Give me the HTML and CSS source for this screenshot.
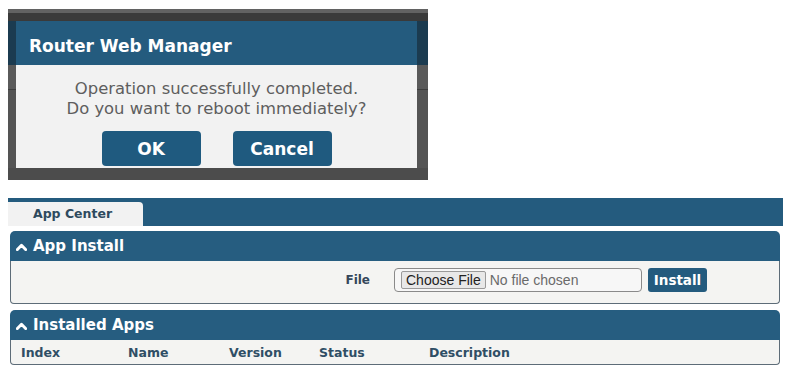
FILE: index.html
```html
<!DOCTYPE html>
<html>
<head>
<meta charset="utf-8">
<link rel="stylesheet" href="styles.css">
</head>
<body>
<div class="shot1">
  <div class="dialog">
    <div class="dialog-title">Router Web Manager</div>
    <div class="dialog-body">
      <p class="dialog-msg">Operation successfully completed.<br>Do you want to reboot immediately?</p>
      <div class="dialog-actions">
        <button class="dbtn dbtn-ok">OK</button>
        <button class="dbtn dbtn-cancel">Cancel</button>
      </div>
    </div>
  </div>
</div>

<div class="app">
  <div class="topbar">
    <div class="tab">App Center</div>
  </div>

  <div class="panel">
    <div class="panel-head">
      <svg class="caret" width="11" height="8" viewBox="0 0 11 8"><path d="M1.4 6.6 L5.5 2.3 L9.6 6.6" fill="none" stroke="#fff" stroke-width="2.9" stroke-linecap="round" stroke-linejoin="round"/></svg>
      <span class="panel-title">App Install</span>
    </div>
    <div class="panel-body install-row">
      <span class="field-label">File</span>
      <div class="file-box">
        <span class="choose-btn">Choose File</span>
        <span class="no-file">No file chosen</span>
      </div>
      <span class="install-btn">Install</span>
    </div>
  </div>

  <div class="panel panel-apps">
    <div class="panel-head">
      <svg class="caret" width="11" height="8" viewBox="0 0 11 8"><path d="M1.4 6.6 L5.5 2.3 L9.6 6.6" fill="none" stroke="#fff" stroke-width="2.9" stroke-linecap="round" stroke-linejoin="round"/></svg>
      <span class="panel-title">Installed Apps</span>
    </div>
    <div class="panel-body apps-row">
      <span>Index</span>
      <span>Name</span>
      <span>Version</span>
      <span>Status</span>
      <span>Description</span>
    </div>
  </div>
</div>
</body>
</html>
```

FILE: styles.css
```css
html, body {
  margin: 0;
  padding: 0;
  background: #ffffff;
}
body {
  font-family: "DejaVu Sans", Verdana, sans-serif;
}

/* ---------- top screenshot: modal ---------- */
.shot1 {
  margin: 9px 0 0 8px;
  width: 420px;
  height: 171px;
  box-sizing: border-box;
  padding: 12px 11px 12px 8px;
  background: linear-gradient(to bottom,
    #626262 0px, #626262 4px,
    #3a3a3a 4px, #3a3a3a 12px,
    #1b3b50 12px, #1b3b50 56px,
    #5a5a5a 56px, #5a5a5a 80px,
    #3e3e3e 80px, #3e3e3e 81px,
    #545454 81px, #545454 159px,
    #4c4c4c 159px, #4c4c4c 171px);
}
.dialog {
  width: 401px;
  height: 147px;
  background: #f2f2f2;
  display: flex;
  flex-direction: column;
}
.dialog-title {
  height: 44px;
  box-sizing: border-box;
  padding: 6px 0 0 13px;
  line-height: 38px;
  background: #245b7e;
  color: #ffffff;
  font-weight: bold;
  font-size: 17px;
}
.dialog-body {
  flex: 1;
  display: flex;
  flex-direction: column;
  align-items: center;
}
.dialog-msg {
  margin: 14px 0 0 0;
  font-size: 16.4px;
  line-height: 20px;
  color: #5e5e5e;
  text-align: center;
}
.dialog-actions {
  margin-top: 12px;
  display: flex;
  gap: 32px;
}
.dbtn {
  height: 35px;
  border: none;
  border-radius: 4px;
  background: #1f5a7f;
  color: #ffffff;
  font-family: "DejaVu Sans", Verdana, sans-serif;
  font-weight: bold;
  font-size: 17px;
  padding: 0;
}
.dbtn-ok { width: 99px; }
.dbtn-cancel { width: 99px; }

/* ---------- bottom screenshot: app center ---------- */
.app {
  margin: 18px 0 0 8px;
  width: 775px;
}
.topbar {
  height: 28px;
  box-sizing: border-box;
  padding-top: 4px;
  background: #245b7e;
}
.tab {
  width: 135px;
  height: 24px;
  box-sizing: border-box;
  padding-left: 25px;
  background: #f2f2f2;
  border-top-right-radius: 4px;
  color: #2e4a5e;
  font-weight: bold;
  font-size: 12.5px;
  line-height: 24px;
}
.panel {
  margin: 5px 0 0 2px;
  width: 770px;
}
.panel-apps {
  margin-top: 6px;
}
.panel-head {
  height: 30px;
  box-sizing: border-box;
  padding-left: 6px;
  display: flex;
  align-items: center;
  gap: 6px;
  background: #265d80;
  border-radius: 5px 5px 0 0;
  color: #ffffff;
}
.caret {
  display: block;
  margin-top: 1px;
}
.panel-title {
  font-weight: bold;
  font-size: 15px;
}
.panel-body {
  background: #f4f4f2;
  border: 1px solid #5d6c78;
  border-top: none;
  border-radius: 0 0 4px 4px;
}
.install-row {
  display: flex;
  align-items: center;
  padding: 7px 0 11px 0;
}
.field-label {
  width: 359px;
  text-align: right;
  font-weight: bold;
  font-size: 12px;
  color: #34475a;
}
.file-box {
  margin-left: 24px;
  width: 248px;
  height: 24px;
  box-sizing: border-box;
  border: 1px solid #8a8a8a;
  border-radius: 4px;
  background: #f7f7f7;
  display: flex;
  align-items: center;
  padding-left: 6px;
  font-family: "Liberation Sans", Arial, sans-serif;
  font-size: 14px;
}
.choose-btn {
  height: 18px;
  box-sizing: border-box;
  padding: 0 4px;
  border: 1px solid #9a9a9a;
  border-radius: 2px;
  background: #e8e8e8;
  color: #222222;
  line-height: 16px;
}
.no-file {
  margin-left: 4px;
  color: #6a6a6a;
}
.install-btn {
  margin-left: 6px;
  width: 59px;
  height: 24px;
  border-radius: 3px;
  background: #245b7e;
  color: #ffffff;
  font-weight: bold;
  font-size: 13.5px;
  line-height: 24px;
  text-align: center;
}
.apps-row {
  height: 25px;
  box-sizing: border-box;
  padding-left: 10px;
  display: grid;
  grid-template-columns: 107px 101px 90px 110px 1fr;
  align-items: center;
  font-weight: bold;
  font-size: 12.5px;
  color: #2f4e65;
}
```
